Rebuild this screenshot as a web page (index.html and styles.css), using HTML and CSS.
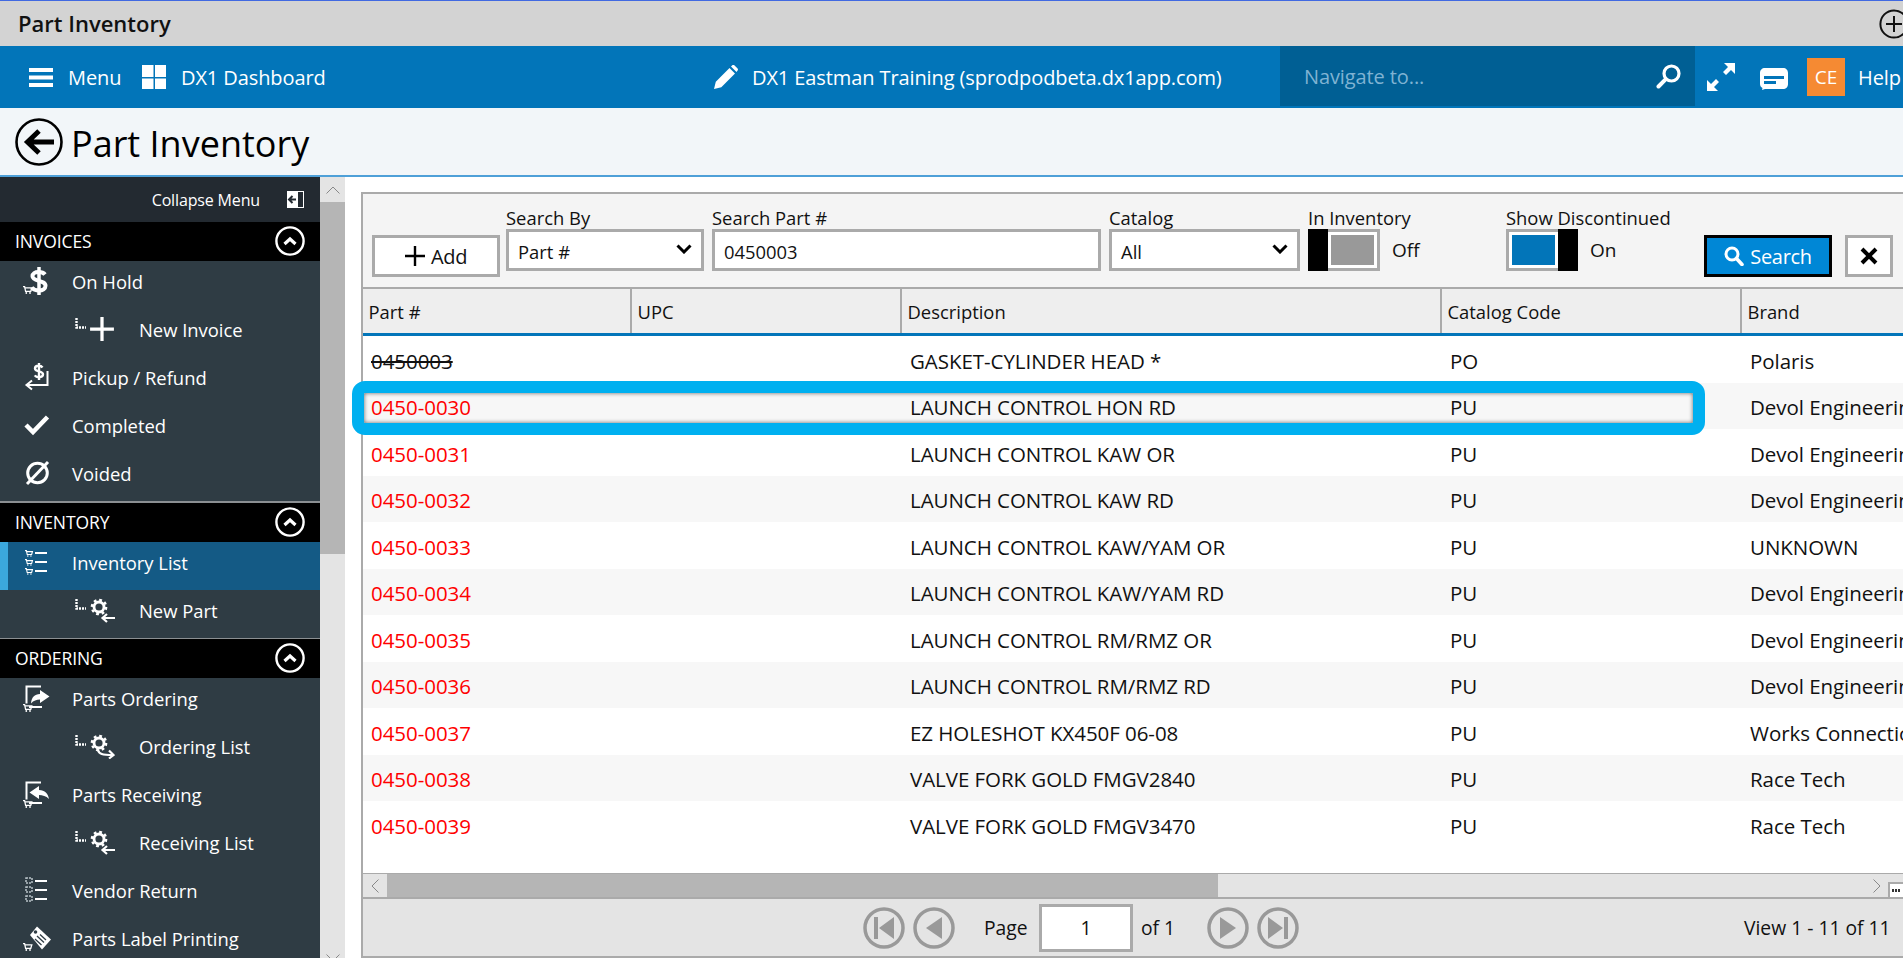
FILE: index.html
```html
<!DOCTYPE html>
<html lang="en">
<head>
<meta charset="utf-8">
<title>Part Inventory</title>
<link rel="stylesheet" href="styles.css">
</head>
<body>
<svg class="defs" width="0" height="0" aria-hidden="true">
  <defs>
    <g id="cart" fill="none" stroke="#fff"><path d="M0 .7h1.6l1 4.6h5.2l1-3.4H2.4" stroke-width="1.3"/><circle cx="3.3" cy="7" r=".9" fill="#fff" stroke="none"/><circle cx="7" cy="7" r=".9" fill="#fff" stroke="none"/></g>
    <symbol id="conn" viewBox="0 0 12 14"><path d="M1.5 1v9.5H11" fill="none" stroke="#fff" stroke-width="2.4" stroke-dasharray="2 1"/></symbol>
    <symbol id="gear" viewBox="0 0 24 24"><circle cx="12" cy="12" r="6" fill="none" stroke="#fff" stroke-width="3.4"/><circle cx="12" cy="12" r="8.6" fill="none" stroke="#fff" stroke-width="2.8" stroke-dasharray="3.4 3.35"/></symbol>
    <symbol id="chev-circle" viewBox="0 0 30 30"><circle cx="15" cy="15" r="13.6" fill="none" stroke="#fff" stroke-width="2.4"/><path d="M9.5 18l5.5-5 5.5 5" fill="none" stroke="#fff" stroke-width="3.2"/></symbol>
  </defs>
</svg>

<header class="topbar">
  <span class="topbar-title">Part Inventory</span>
  <svg class="plus-circle" viewBox="0 0 30 30"><circle cx="15" cy="15" r="13.6" fill="none" stroke="#111" stroke-width="2"/><path d="M15 7v16M7 15h16" stroke="#111" stroke-width="2"/></svg>
</header>

<nav class="nav">
  <svg class="nav-menu-icon" viewBox="0 0 24 19"><path d="M0 0h24v4H0zM0 7.5h24v4H0zM0 15h24v4H0z" fill="#fff"/></svg>
  <span class="nav-menu-text">Menu</span>
  <svg class="nav-dash-icon" viewBox="0 0 24 24"><path d="M0 0h11.5v12H0zM13 0h11v12H13zM0 13.500h11.500V24H0zM13 13.500h11V24H13z" fill="#fff"/></svg>
  <span class="nav-dash-text">DX1 Dashboard</span>
  <svg class="nav-pencil" viewBox="0 0 24 24"><path d="M0 24l1.800-7.200L15.500 3l5.500 5.500L7.300 22.200zM17 1.500 18.300.3c.6-.5 1.400-.5 2 0l3.300 3.300c.5.600.5 1.400 0 2L22.500 7z" fill="#fff"/></svg>
  <span class="nav-site">DX1 Eastman Training (sprodpodbeta.dx1app.com)</span>
  <div class="nav-search">
    <span class="nav-placeholder">Navigate to...</span>
    <svg class="nav-search-icon" viewBox="0 0 25 25"><circle cx="15.500" cy="9.500" r="7.500" fill="none" stroke="#fff" stroke-width="3.200"/><path d="M9.800 15.200 2.500 22.500" stroke="#fff" stroke-width="4" stroke-linecap="round"/></svg>
  </div>
  <svg class="nav-expand" viewBox="0 0 28 28"><path d="M28 0v11l-4-4-5 5-3-3 5-5-4-4zM0 28V17l4 4 5-5 3 3-5 5 4 4z" fill="#fff"/></svg>
  <svg class="nav-chat" viewBox="0 0 28 22"><path d="M5 0h18c3 0 5 2 5 5v11c0 3-2 5-5 5H5l-3 1 .5-2C1 19 0 18 0 16V5c0-3 2-5 5-5z" fill="#fff"/><path d="M4 8h20v3H4zM4 13h12v3H4z" fill="#0275b9"/></svg>
  <span class="nav-avatar">CE</span>
  <span class="nav-help">Help</span>
</nav>

<div class="titlebar">
  <svg class="back-icon" viewBox="0 0 48 48"><circle cx="24" cy="24" r="22.500" fill="none" stroke="#000" stroke-width="2.600"/><path d="M39 24H14M24 13 12.500 24 24 35" fill="none" stroke="#000" stroke-width="5"/></svg>
  <h1 class="page-title">Part Inventory</h1>
</div>

<div class="main">
  <aside class="sidebar">
    <div class="collapse-row">
      <span>Collapse Menu</span>
      <svg class="collapse-icon" viewBox="0 0 17 17"><path d="M0 0h17v17H0z" fill="#fff"/><path d="M11 1h5v15h-5z" fill="#232a31"/><path d="M2 8.500h7M5.500 5 2 8.500 5.500 12" fill="none" stroke="#232a31" stroke-width="2"/></svg>
    </div>

    <div class="group-head"><span>INVOICES</span><svg class="group-chevron"><use href="#chev-circle"/></svg></div>
    <a class="item"><svg class="item-icon" viewBox="0 0 30 30"><path d="M23 8.500c-1.500-2-4-2.500-6.500-2.500-3.500 0-6 1.500-6 4.200 0 5.800 13 3.500 13 9.600 0 3-3 4.700-6.500 4.700-3 0-5.700-1-7.300-3" fill="none" stroke="#fff" stroke-width="4"/><path d="M17 1v28" stroke="#fff" stroke-width="3.500"/><use href="#cart" transform="translate(1 20)"/></svg><span>On Hold</span></a>
    <a class="item sub"><svg class="conn"><use href="#conn"/></svg><svg class="sub-icon" viewBox="0 0 24 24"><path d="M10.500 1h3v9.500H23v3h-9.500V23h-3v-9.500H1v-3h9.500z" fill="#fff"/></svg><span>New Invoice</span></a>
    <a class="item"><svg class="item-icon" viewBox="0 0 30 30"><path d="M20.500 5.500C19.500 4 18 3.800 16.500 3.800c-2 0-3.500 1-3.500 2.700 0 3.700 8 2 8 5.800 0 1.800-1.800 2.900-4 2.900-1.800 0-3.400-.6-4.300-1.800M17 1v17" fill="none" stroke="#fff" stroke-width="2.400"/><path d="M25.500 9v14H5M10 18.500 4.500 23l5.500 4.500" fill="none" stroke="#fff" stroke-width="2"/></svg><span>Pickup / Refund</span></a>
    <a class="item"><svg class="item-icon" viewBox="0 0 30 30"><path d="M4 15l7 7L25.500 7" fill="none" stroke="#fff" stroke-width="4.500"/></svg><span>Completed</span></a>
    <a class="item"><svg class="item-icon" viewBox="0 0 30 30"><circle cx="15.500" cy="15" r="9.800" fill="none" stroke="#fff" stroke-width="3"/><path d="M5 26 26 4" stroke="#fff" stroke-width="3"/></svg><span>Voided</span></a>

    <div class="group-rule"></div>
    <div class="group-head"><span>INVENTORY</span><svg class="group-chevron"><use href="#chev-circle"/></svg></div>
    <a class="item active"><svg class="item-icon" viewBox="0 0 30 30"><use href="#cart" transform="translate(3 3) scale(.85)"/><use href="#cart" transform="translate(3 12) scale(.85)"/><use href="#cart" transform="translate(3 21) scale(.85)"/><path d="M13 6h12M13 15h12M13 24h12" stroke="#fff" stroke-width="2.200"/></svg><span>Inventory List</span></a>
    <a class="item sub"><svg class="conn"><use href="#conn"/></svg><svg class="sub-icon" viewBox="0 0 26 26"><use href="#gear" x="0" y="0" width="20" height="20"/><path d="M26 21H14M18 17l-4.500 4 4.500 4" fill="none" stroke="#fff" stroke-width="2.200"/></svg><span>New Part</span></a>

    <div class="group-rule thin"></div>
    <div class="group-head"><span>ORDERING</span><svg class="group-chevron"><use href="#chev-circle"/></svg></div>
    <a class="item"><svg class="item-icon" viewBox="0 0 30 30"><path d="M19 3.500H4.500v17M7 24h13" fill="none" stroke="#fff" stroke-width="2"/><path d="M18 7l9.500 6.500L18 20v-3.500c-3.500 0-6.500 1-9 4 .5-6 3.500-9.500 9-9.500z" fill="#fff"/><use href="#cart" transform="translate(1 21)"/></svg><span>Parts Ordering</span></a>
    <a class="item sub"><svg class="conn"><use href="#conn"/></svg><svg class="sub-icon" viewBox="0 0 26 26"><use href="#gear" x="0" y="0" width="20" height="20"/><path d="M9 17c1 4 4 5 15 5M20 17.500l4.500 4.500-4.500 3.500" fill="none" stroke="#fff" stroke-width="2.200"/></svg><span>Ordering List</span></a>
    <a class="item"><svg class="item-icon" viewBox="0 0 30 30"><path d="M19 3.500H4.500v17M7 24h13" fill="none" stroke="#fff" stroke-width="2"/><path d="M17 7 7.500 13.500 17 20v-4c3.500 0 7 1 10 4-1-5.500-4-9-10-9z" fill="#fff"/><use href="#cart" transform="translate(1 21)"/></svg><span>Parts Receiving</span></a>
    <a class="item sub"><svg class="conn"><use href="#conn"/></svg><svg class="sub-icon" viewBox="0 0 26 26"><use href="#gear" x="0" y="0" width="20" height="20"/><path d="M26 21H14M18 17l-4.500 4 4.500 4" fill="none" stroke="#fff" stroke-width="2.200"/></svg><span>Receiving List</span></a>
    <a class="item"><svg class="item-icon" viewBox="0 0 30 30"><path d="M4 3h6v5H4zM4 12h6v5H4zM4 21h6v5H4z" fill="none" stroke="#b9c2c8" stroke-width="1.500" stroke-dasharray="2 1"/><path d="M13 6h12M13 15h12M13 24h12" stroke="#fff" stroke-width="2.200"/></svg><span>Vendor Return</span></a>
    <a class="item"><svg class="item-icon" viewBox="0 0 30 30"><path d="M8 12 15 3.500l14 13-9 10z" fill="#fff"/><circle cx="13.500" cy="9" r="1.800" fill="#2f3c44"/><path d="M15 13l7 6.500M13 16l6.500 6M18 11.500l6 5.500" stroke="#2f3c44" stroke-width="1.300"/><use href="#cart" transform="translate(1 20)"/></svg><span>Parts Label Printing</span></a>
  </aside>

  <div class="side-scroll">
    <div class="side-scroll-up"><svg viewBox="0 0 14 8"><path d="M.5 7.500 7 1l6.500 6.500" fill="none" stroke="#888" stroke-width="1"/></svg></div>
    <div class="side-scroll-thumb"></div>
    <div class="side-scroll-track"><svg viewBox="0 0 14 8"><path d="M.5.500 7 7 13.500.5" fill="none" stroke="#888" stroke-width="1"/></svg></div>
  </div>

  <section class="panel">
    <div class="toolbar">
      <button class="btn btn-add"><svg viewBox="0 0 20 20"><path d="M8.800 0h2.400v8.800H20v2.400h-8.800V20H8.800v-8.800H0V8.800h8.800z" fill="#000"/></svg>Add</button>
      <div class="field field-by">
        <label>Search By</label>
        <div class="control"><span>Part #</span><svg class="caret" viewBox="0 0 16 10"><path d="M1.500 1.500 8 8l6.500-6.500" fill="none" stroke="#000" stroke-width="3"/></svg></div>
      </div>
      <div class="field field-part">
        <label>Search Part #</label>
        <div class="control"><span>0450003</span></div>
      </div>
      <div class="field field-cat">
        <label>Catalog</label>
        <div class="control"><span>All</span><svg class="caret" viewBox="0 0 16 10"><path d="M1.500 1.500 8 8l6.500-6.500" fill="none" stroke="#000" stroke-width="3"/></svg></div>
      </div>
      <div class="field field-toggle">
        <label>In Inventory</label>
        <div class="toggle-row">
          <div class="toggle off"><span class="toggle-fill"></span><span class="toggle-handle"></span></div>
          <span>Off</span>
        </div>
      </div>
      <div class="field field-toggle">
        <label>Show Discontinued</label>
        <div class="toggle-row">
          <div class="toggle on"><span class="toggle-fill"></span><span class="toggle-handle"></span></div>
          <span class="toggle-state-on">On</span>
        </div>
      </div>
      <button class="btn btn-search"><svg viewBox="0 0 20 20"><circle cx="8" cy="8" r="6" fill="none" stroke="#fff" stroke-width="3"/><path d="M12.500 12.500 18 18.500" stroke="#fff" stroke-width="3.600" stroke-linecap="round"/></svg>Search</button>
      <button class="btn btn-clear" aria-label="Clear"><svg viewBox="0 0 18 18"><path d="M2 2l14 14M16 2 2 16" stroke="#000" stroke-width="4"/></svg></button>
    </div>

    <div class="grid-head row-cols">
      <div>Part #</div><div>UPC</div><div>Description</div><div>Catalog Code</div><div>Brand</div>
    </div>

    <div class="grid-body">
      <div class="row row-cols"><div class="disc">0450003</div><div></div><div>GASKET-CYLINDER HEAD *</div><div>PO</div><div>Polaris</div></div>
      <div class="row row-cols"><div class="part">0450-0030</div><div></div><div>LAUNCH CONTROL HON RD</div><div>PU</div><div>Devol Engineering</div></div>
      <div class="row row-cols"><div class="part">0450-0031</div><div></div><div>LAUNCH CONTROL KAW OR</div><div>PU</div><div>Devol Engineering</div></div>
      <div class="row row-cols"><div class="part">0450-0032</div><div></div><div>LAUNCH CONTROL KAW RD</div><div>PU</div><div>Devol Engineering</div></div>
      <div class="row row-cols"><div class="part">0450-0033</div><div></div><div>LAUNCH CONTROL KAW/YAM OR</div><div>PU</div><div>UNKNOWN</div></div>
      <div class="row row-cols"><div class="part">0450-0034</div><div></div><div>LAUNCH CONTROL KAW/YAM RD</div><div>PU</div><div>Devol Engineering</div></div>
      <div class="row row-cols"><div class="part">0450-0035</div><div></div><div>LAUNCH CONTROL RM/RMZ OR</div><div>PU</div><div>Devol Engineering</div></div>
      <div class="row row-cols"><div class="part">0450-0036</div><div></div><div>LAUNCH CONTROL RM/RMZ RD</div><div>PU</div><div>Devol Engineering</div></div>
      <div class="row row-cols"><div class="part">0450-0037</div><div></div><div>EZ HOLESHOT KX450F 06-08</div><div>PU</div><div>Works Connection</div></div>
      <div class="row row-cols"><div class="part">0450-0038</div><div></div><div>VALVE FORK GOLD FMGV2840</div><div>PU</div><div>Race Tech</div></div>
      <div class="row row-cols"><div class="part">0450-0039</div><div></div><div>VALVE FORK GOLD FMGV3470</div><div>PU</div><div>Race Tech</div></div>
    </div>

    <div class="hscroll">
      <div class="hscroll-left"><svg viewBox="0 0 8 14"><path d="M7.500.5 1 7l6.500 6.500" fill="none" stroke="#888" stroke-width="1"/></svg></div>
      <div class="hscroll-thumb"></div>
      <div class="hscroll-track"><svg viewBox="0 0 8 14"><path d="M.5.5 7 7 .5 13.500" fill="none" stroke="#888" stroke-width="1"/></svg></div>
      <div class="hscroll-corner"><i></i><i></i><i></i></div>
    </div>

    <div class="pager">
      <div class="pager-buttons first">
        <svg viewBox="0 0 42 42"><circle cx="21" cy="21" r="19" fill="none" stroke="#999" stroke-width="3.500"/><path d="M11 10h4v22h-4zM31 10v22L16 21z" fill="#999"/></svg>
        <svg viewBox="0 0 42 42"><circle cx="21" cy="21" r="19" fill="none" stroke="#999" stroke-width="3.500"/><path d="M29 10v22L13 21z" fill="#999"/></svg>
      </div>
      <span class="pager-page">Page</span>
      <div class="pager-input">1</div>
      <span class="pager-of">of 1</span>
      <div class="pager-buttons last">
        <svg viewBox="0 0 42 42"><circle cx="21" cy="21" r="19" fill="none" stroke="#999" stroke-width="3.500"/><path d="M13 10v22l16-11z" fill="#999"/></svg>
        <svg viewBox="0 0 42 42"><circle cx="21" cy="21" r="19" fill="none" stroke="#999" stroke-width="3.500"/><path d="M27 10h4v22h-4zM11 10v22l15-11z" fill="#999"/></svg>
      </div>
      <span class="pager-view">View 1 - 11 of 11</span>
    </div>
  </section>

  <div class="highlight"></div>
</div>
</body>
</html>
```
FILE: styles.css
```css
* { box-sizing: border-box; }
html, body { margin: 0; padding: 0; }
body {
  width: 1903px;
  height: 958px;
  overflow: hidden;
  background: #fff;
  color: #111;
  font-family: "Open Sans", "Noto Sans", sans-serif;
  font-size: 18.4px;
}
.defs { position: absolute; }
svg { display: block; flex: none; }

.topbar {
  height: 46px;
  border-top: 1px solid #4169e1;
  background: #d3d3d3;
  display: flex;
  align-items: center;
  justify-content: space-between;
  padding-left: 18px;
}
.topbar-title { font-size: 22px; font-weight: 600; color: #111; margin-top: -2px; }
.plus-circle { width: 30px; height: 30px; margin-right: -6px; }

.nav {
  height: 62px;
  background: #0275b9;
  color: #fff;
  display: flex;
  align-items: center;
  font-size: 20px;
  letter-spacing: -0.1px;
}
.nav-menu-icon { width: 24px; height: 19px; margin-left: 29px; }
.nav-menu-text { margin-left: 15px; width: 60px; }
.nav-dash-icon { width: 24px; height: 24px; margin-left: 14px; }
.nav-dash-text { margin-left: 15px; width: 533px; }
.nav-pencil { width: 24px; height: 24px; }
.nav-site { margin-left: 14px; width: 528px; }
.nav-search {
  width: 415px;
  height: 60px;
  align-self: flex-start;
  background: #005f94;
  display: flex;
  align-items: center;
  justify-content: space-between;
  padding: 0 14px 0 24px;
}
.nav-placeholder { color: #7fb3d3; }
.nav-search-icon { width: 25px; height: 25px; }
.nav-expand { width: 28px; height: 28px; margin-left: 12px; }
.nav-chat { width: 28px; height: 22px; margin-left: 25px; margin-top: 4px; }
.nav-avatar {
  width: 38px;
  height: 38px;
  flex: none;
  margin-left: 19px;
  background: #f58a33;
  display: flex;
  align-items: center;
  justify-content: center;
  font-size: 19px;
}
.nav-help { margin-left: 13px; }

.titlebar {
  height: 69px;
  background: #f2f6f9;
  border-bottom: 2px solid #4ea0d8;
  display: flex;
  align-items: center;
  padding-left: 15px;
}
.back-icon { width: 48px; height: 48px; }
.page-title { margin: 3px 0 0 8px; font-size: 36px; font-weight: 400; color: #000; }

.main {
  position: relative;
  height: 781px;
  display: flex;
  align-items: flex-start;
}

.sidebar {
  width: 320px;
  height: 781px;
  flex: none;
  background: #2f3c44;
  color: #fff;
  overflow: hidden;
}
.collapse-row {
  height: 45px;
  background: #232a31;
  display: flex;
  align-items: center;
  justify-content: flex-end;
  padding-right: 16px;
  font-size: 16px;
  letter-spacing: -0.15px;
}
.collapse-icon { width: 17px; height: 17px; margin-left: 27px; margin-top: -1px; }
.group-head {
  height: 39px;
  background: #000;
  display: flex;
  align-items: center;
  justify-content: space-between;
  padding: 0 15px;
  font-size: 17.5px;
  letter-spacing: -0.1px;
}
.group-head span { margin-top: -2px; }
.group-chevron { width: 30px; height: 30px; margin-top: -1px; }
.group-rule { height: 2px; background: #8b8f92; }
.group-rule.thin { height: 1px; }
.item {
  height: 48px;
  display: flex;
  align-items: center;
  padding-left: 22px;
  padding-bottom: 8px;
  color: #fff;
}
.item-icon { width: 30px; height: 30px; margin-right: 20px; }
.item.sub { padding-left: 75px; }
.conn { width: 12px; height: 14px; margin-top: -10px; margin-right: 2px; }
.sub-icon { width: 26px; height: 26px; margin-right: 24px; }
.item.active {
  background: #145a85;
  border-left: 8px solid #3ba7dc;
  padding-left: 14px;
}

.side-scroll {
  width: 25px;
  height: 781px;
  flex: none;
  display: flex;
  flex-direction: column;
  background: #e4e4e4;
}
.side-scroll-up { height: 25px; display: flex; align-items: center; justify-content: center; }
.side-scroll-up svg, .side-scroll-track svg { width: 14px; height: 8px; }
.side-scroll-thumb { height: 352px; background: #b5b5b5; }
.side-scroll-track { flex: 1; display: flex; align-items: flex-end; justify-content: center; }
.side-scroll-track svg { margin-bottom: -4px; }

.panel {
  width: 1560px;
  height: 766px;
  flex: none;
  margin: 15px 0 0 16px;
  border-top: 2px solid #aaa;
  border-left: 2px solid #aaa;
  display: flex;
  flex-direction: column;
}

.toolbar {
  height: 95px;
  flex: none;
  background: #f4f4f4;
  border-bottom: 2px solid #aaa;
  padding: 13px 0 0 9px;
  display: flex;
  align-items: flex-start;
}
.btn {
  height: 42px;
  margin-top: 28px;
  border: 3px solid #aaa;
  background: #fff;
  font: inherit;
  color: #111;
  display: flex;
  align-items: center;
  justify-content: center;
  padding: 0;
}
.btn-add { width: 128px; font-size: 20px; letter-spacing: -0.3px; }
.btn-add svg { width: 20px; height: 20px; margin-right: 6px; }
.btn-search {
  width: 128px;
  border-color: #000;
  background: #0087d6;
  color: #fff;
  font-size: 20px;
  letter-spacing: -0.3px;
}
.btn-search svg { width: 20px; height: 20px; margin-right: 6px; }
.btn-clear { width: 48px; margin-left: 13px; }
.btn-clear svg { width: 18px; height: 18px; }

.field label { display: block; height: 22px; line-height: 22px; color: #111; }
.control {
  height: 42px;
  border: 3px solid #aaa;
  background: #fff;
  display: flex;
  align-items: center;
  justify-content: space-between;
  padding: 2px 9px 0;
}
.caret { width: 16px; height: 10px; margin-top: -5px; }
.field-by { width: 198px; margin-left: 6px; }
.field-part { width: 389px; margin-left: 8px; }
.field-cat { width: 191px; margin-left: 8px; }
.field-toggle { width: 198px; }
.field-cat + .field-toggle { margin-left: 8px; }

.toggle-row { display: flex; align-items: center; gap: 12px; font-size: 19px; }
.toggle {
  width: 72px;
  height: 42px;
  border: 3px solid #aaa;
  background: #fff;
  position: relative;
  padding: 3px;
}
.toggle-fill { display: block; height: 100%; }
.toggle-handle {
  position: absolute;
  top: -3px;
  bottom: -3px;
  width: 20px;
  background: #000;
}
.toggle.off .toggle-fill { background: #999; margin-left: 17px; }
.toggle.off .toggle-handle { left: -3px; }
.toggle.on .toggle-fill { background: #0275b9; margin-right: 17px; }
.toggle.on .toggle-handle { right: -3px; }

.row-cols {
  display: grid;
  grid-template-columns: 269px 270px 540px 300px 1fr;
}
.grid-head {
  height: 47px;
  flex: none;
  background: #eee;
  border-bottom: 3px solid #0275b9;
}
.grid-head > div {
  display: flex;
  align-items: center;
  padding-left: 5.5px;
  border-right: 2px solid #aaa;
}
.grid-head > div:last-child { border-right: 0; }

.grid-body { flex: 1; min-height: 0; }
.row { height: 46.5px; align-items: center; font-size: 20.5px; padding-top: 3px; }
.row:nth-child(even) { background: #f7f7f7; }
.row > div { padding-left: 8px; white-space: nowrap; overflow: hidden; letter-spacing: -0.05px; }
.part { color: #f00; }
.disc { text-decoration: line-through; }

.hscroll {
  height: 24px;
  flex: none;
  background: #e4e4e4;
  border-top: 1px solid #aaa;
  display: flex;
  align-items: center;
}
.hscroll svg { width: 8px; height: 14px; }
.hscroll-left { width: 24px; height: 100%; display: flex; align-items: center; justify-content: center; }
.hscroll-thumb { width: 831px; height: 100%; background: #b5b5b5; }
.hscroll-track { width: 670px; height: 100%; display: flex; align-items: center; justify-content: flex-end; padding-right: 7px; }
.hscroll-corner {
  width: 30px;
  height: 16px;
  margin-top: 8px;
  border-top: 2px solid #aaa;
  border-left: 2px solid #aaa;
  background: #fff;
  display: flex;
  gap: 1px;
  padding: 5px 0 0 2px;
}
.hscroll-corner i { display: block; width: 2px; height: 3px; background: #333; }

.pager {
  height: 61px;
  flex: none;
  background: #e4e4e4;
  border-top: 2px solid #aaa;
  border-bottom: 2px solid #aaa;
  display: flex;
  align-items: center;
  font-size: 19.3px;
}
.pager-buttons { display: flex; gap: 8px; }
.pager-buttons svg { width: 42px; height: 42px; }
.pager-buttons.first { margin-left: 500px; }
.pager-page { margin-left: 29px; width: 55px; }
.pager-input {
  width: 94px;
  height: 48px;
  border: 3px solid #aaa;
  background: #fff;
  display: flex;
  align-items: center;
  justify-content: center;
}
.pager-of { margin-left: 8px; width: 66px; }
.pager-view { margin-left: 445px; }

.highlight {
  position: absolute;
  left: 352px;
  top: 204px;
  width: 1353px;
  height: 54px;
  border: 12px solid #00b0f0;
  border-radius: 13px;
  box-shadow: inset 0 0 4px 0 rgba(0, 0, 0, .6);
  pointer-events: none;
}
```
